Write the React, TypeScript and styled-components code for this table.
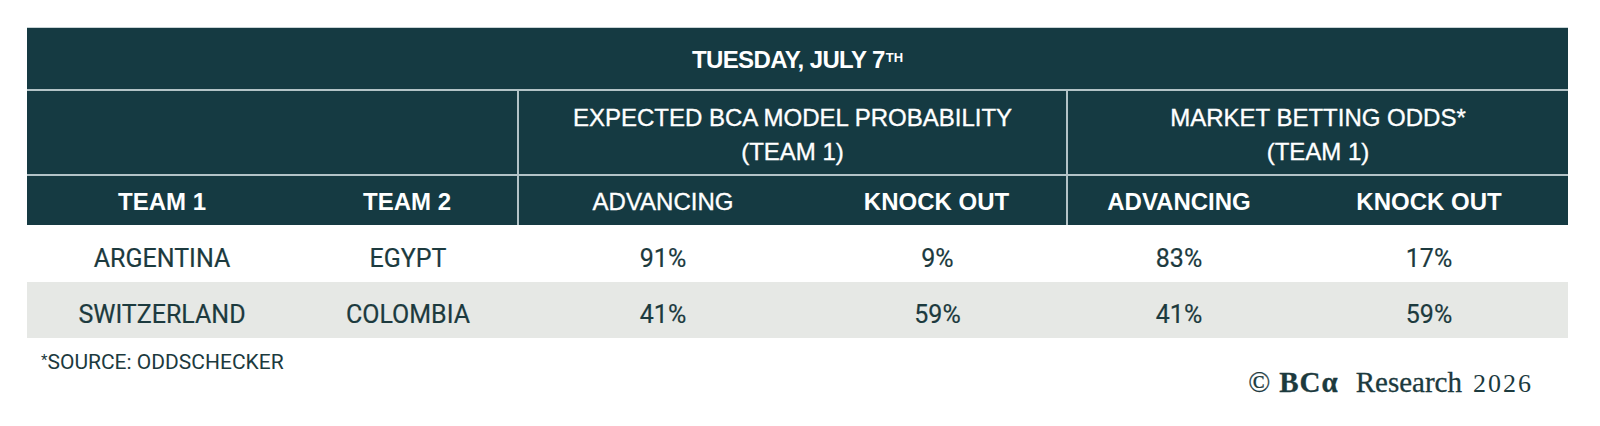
import React from "react";
import styled, { createGlobalStyle } from "styled-components";

const GlobalStyle = createGlobalStyle`
  html, body { margin: 0; padding: 0; background: #ffffff; }
  body { width: 1600px; height: 426px; overflow: hidden; }
`;

const TEAL = "#153a42";
const LINE = "#b3c3c7";
const INK = "#1c3a3e";

const Page = styled.div`
  padding: 27px 0 0 27px;
  width: 1541px;
`;

const Grid = styled.div`
  display: grid;
  grid-template-columns: 270px 222px 288px 261px 222px 278px;
  width: 1541px;
`;

const HeadCell = styled.div<{ $span?: string; $right?: boolean; $bottom?: boolean }>`
  grid-column: ${(p) => p.$span || "auto"};
  background: ${TEAL};
  color: #ffffff;
  display: flex;
  align-items: center;
  justify-content: center;
  text-align: center;
  box-sizing: border-box;
  font-family: "Liberation Sans", Arial, sans-serif;
  border-right: ${(p) => (p.$right ? `2px solid ${LINE}` : "none")};
  border-bottom: ${(p) => (p.$bottom ? `2px solid ${LINE}` : "none")};
`;

const TitleCell = styled(HeadCell)`
  height: 64px;
  border-top: 1px solid #c8d3d5;
  font-size: 24px;
  font-weight: 700;
  letter-spacing: -0.6px;
  padding-top: 2px;
`;

const Sup = styled.sup`
  font-size: 13px;
  font-weight: 700;
  letter-spacing: 0;
  position: relative;
  top: -2px;
  vertical-align: top;
  margin-left: 1px;
`;

const GroupCell = styled(HeadCell)`
  height: 85px;
  font-size: 24px;
  font-weight: 400;
  line-height: 34px;
  padding-top: 4px;
  -webkit-text-stroke: 0.35px #ffffff;
`;

const SubCell = styled(HeadCell)<{ $bold?: boolean }>`
  height: 49px;
  font-size: 24px;
  font-weight: ${(p) => (p.$bold ? 700 : 400)};
  padding-top: 2px;
  -webkit-text-stroke: ${(p) => (p.$bold ? "0" : "0.35px #ffffff")};
`;

const BodyCell = styled.div<{ $shade?: boolean }>`
  height: ${(p) => (p.$shade ? "56px" : "57px")};
  background: ${(p) => (p.$shade ? "#e6e8e5" : "#ffffff")};
  color: ${INK};
  display: flex;
  align-items: center;
  justify-content: center;
  box-sizing: border-box;
  padding-top: 9px;
  font-family: Roboto, "Liberation Sans", sans-serif;
  font-size: 25px;
  font-weight: 400;
  -webkit-text-stroke: 0.2px ${INK};
`;

const Footer = styled.div`
  display: flex;
  justify-content: space-between;
  align-items: flex-start;
  width: 1506px;
`;

const Note = styled.div`
  margin: 12px 0 0 14px;
  font-family: Roboto, "Liberation Sans", sans-serif;
  font-size: 21px;
  color: ${INK};
`;

const Star = styled.span`
  font-size: 15px;
  vertical-align: top;
  position: relative;
  top: 1px;
`;

const Copyright = styled.div`
  margin-top: 28px;
  display: flex;
  align-items: baseline;
  font-family: "Liberation Serif", "Times New Roman", serif;
  color: #1c3a3e;
  font-size: 29px;
  -webkit-text-stroke: 0.3px #1c3a3e;
`;

const Mark = styled.span`
  margin-right: 9px;
`;

const Brand = styled.span`
  font-weight: 700;
  margin-right: 17px;
  letter-spacing: 1px;
`;

const Year = styled.span`
  font-size: 26px;
  letter-spacing: 2px;
  margin-left: 11px;
  -webkit-text-stroke: 0;
`;

const rows = [
  ["ARGENTINA", "EGYPT", "91%", "9%", "83%", "17%"],
  ["SWITZERLAND", "COLOMBIA", "41%", "59%", "41%", "59%"],
];

export default function App() {
  return (
    <>
      <GlobalStyle />
      <Page>
        <Grid>
          <TitleCell $span="1 / -1" $bottom>
            TUESDAY, JULY 7<Sup>TH</Sup>
          </TitleCell>
          <GroupCell $span="1 / 3" $right $bottom />
          <GroupCell $span="3 / 5" $right $bottom>
            EXPECTED BCA MODEL PROBABILITY
            <br />
            (TEAM 1)
          </GroupCell>
          <GroupCell $span="5 / 7" $bottom>
            MARKET BETTING ODDS*
            <br />
            (TEAM 1)
          </GroupCell>
          <SubCell $bold>TEAM 1</SubCell>
          <SubCell $bold $right>TEAM 2</SubCell>
          <SubCell>ADVANCING</SubCell>
          <SubCell $bold $right>KNOCK OUT</SubCell>
          <SubCell $bold>ADVANCING</SubCell>
          <SubCell $bold>KNOCK OUT</SubCell>
          {rows.map((r, i) =>
            r.map((v, j) => (
              <BodyCell key={`${i}-${j}`} $shade={i === 1}>
                {v}
              </BodyCell>
            ))
          )}
        </Grid>
        <Footer>
          <Note>
            <Star>*</Star>SOURCE: ODDSCHECKER
          </Note>
          <Copyright>
            <Mark>©</Mark>
            <Brand>BCα</Brand>
            <span>Research</span>
            <Year>2026</Year>
          </Copyright>
        </Footer>
      </Page>
    </>
  );
}
